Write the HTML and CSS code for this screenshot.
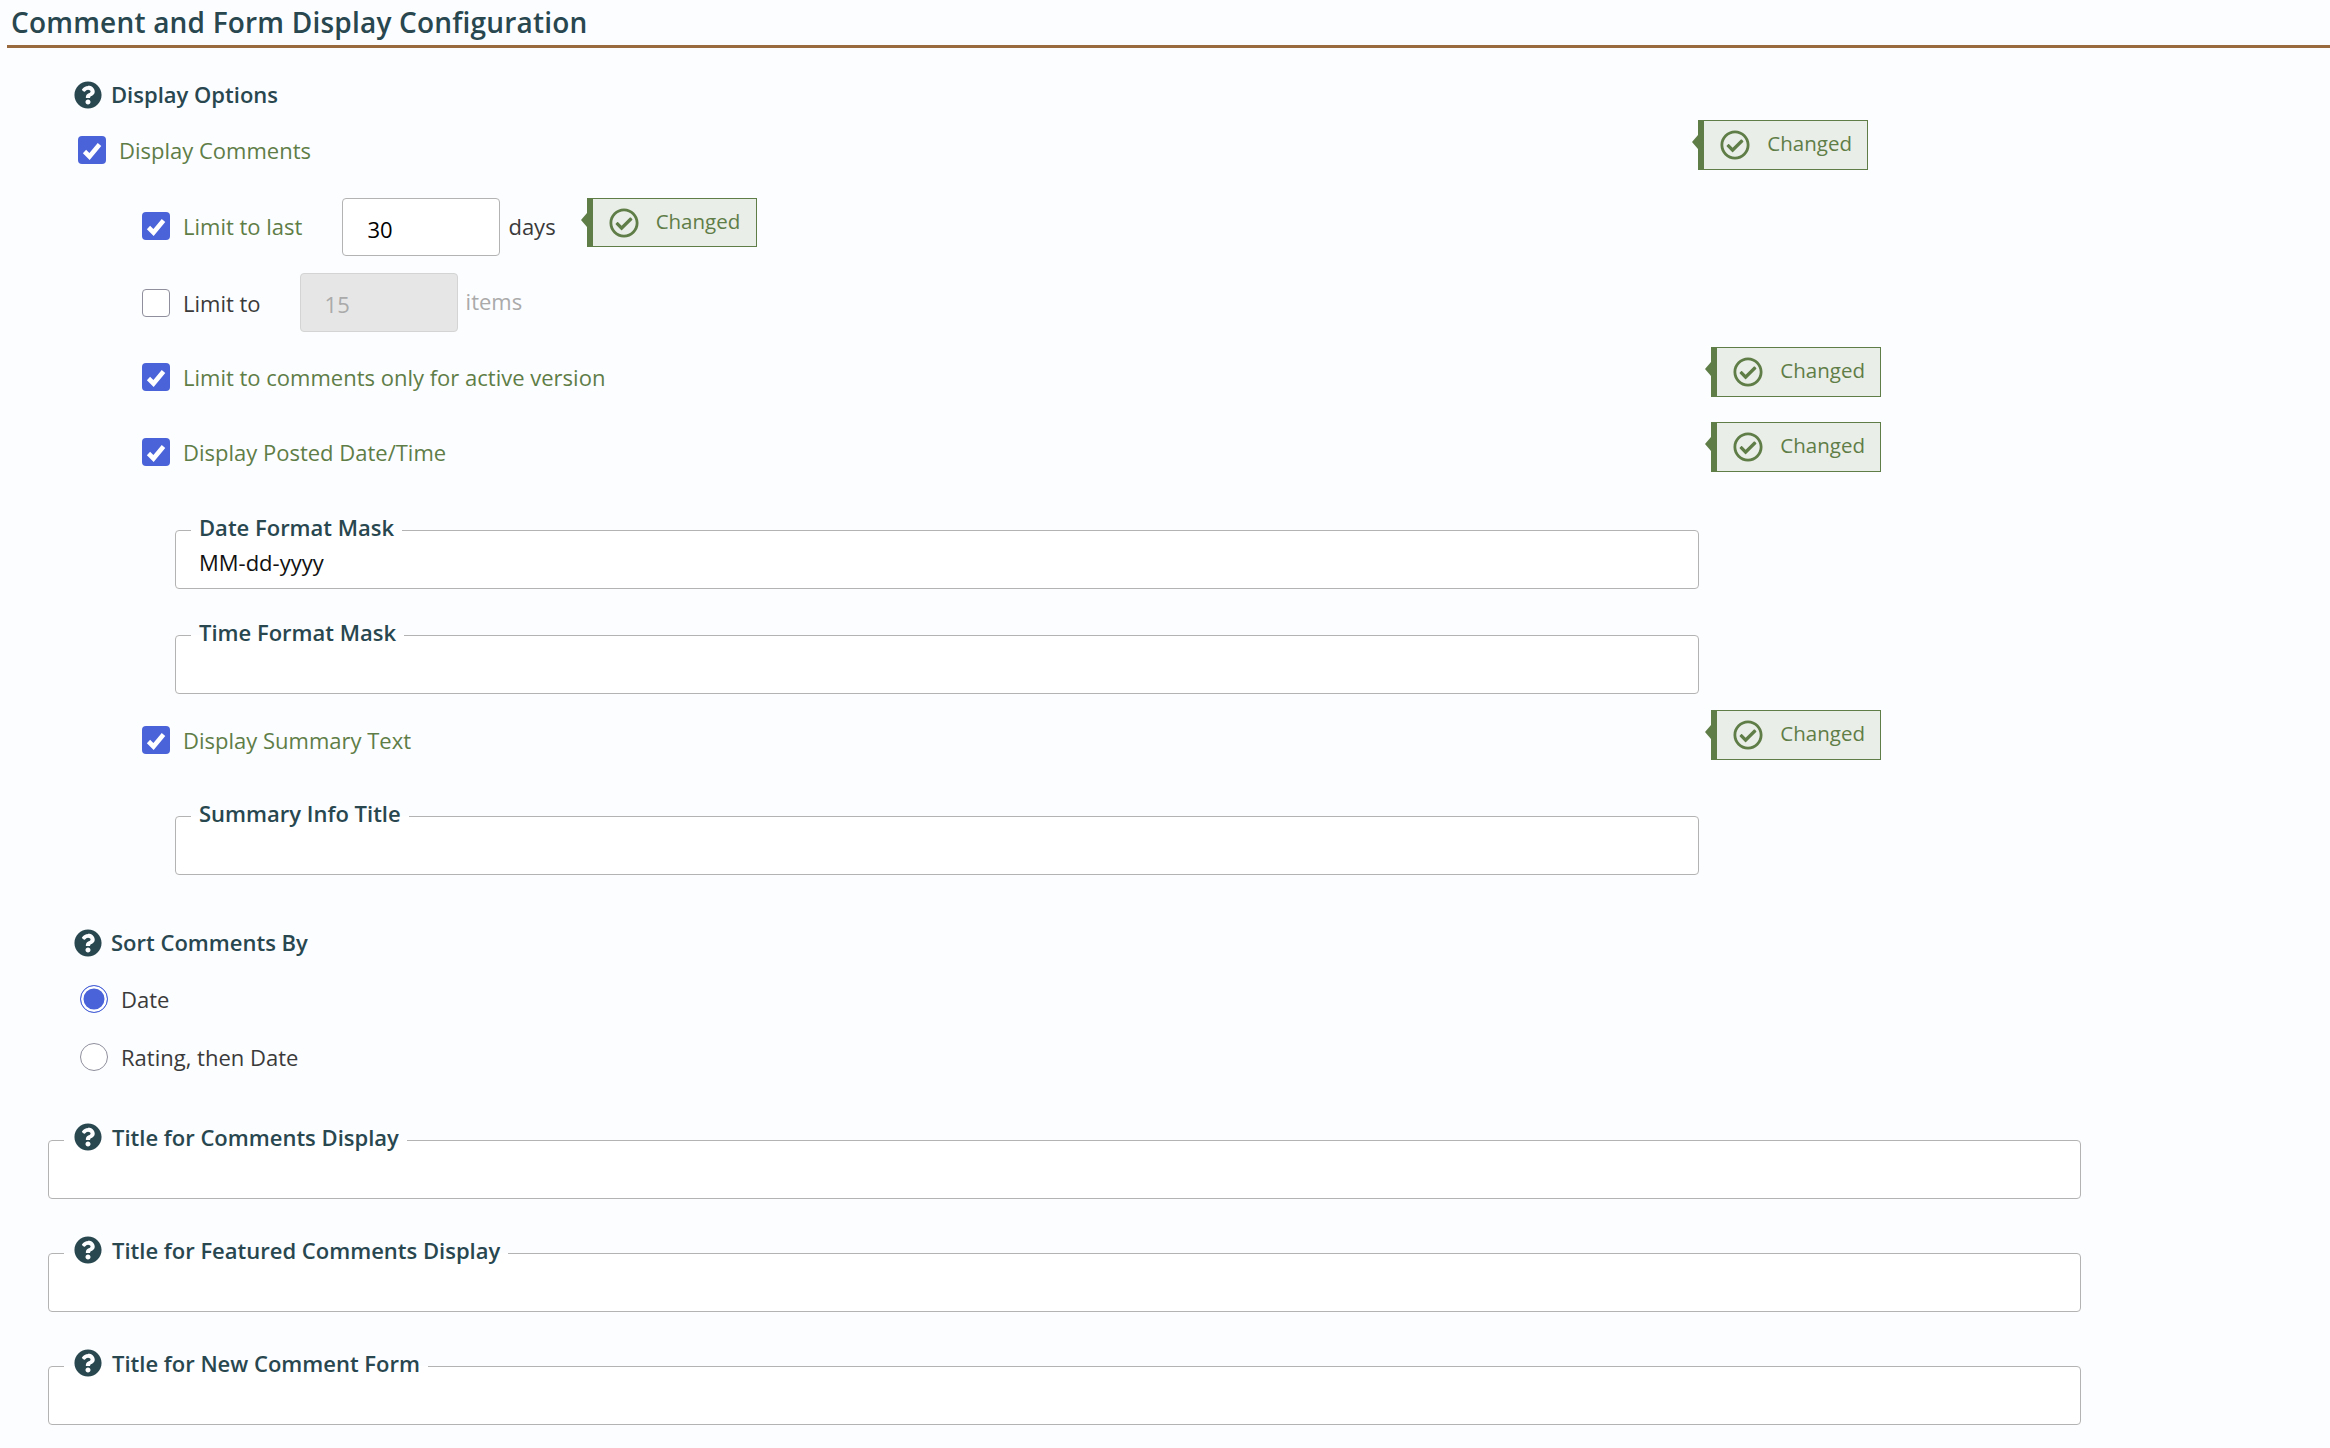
FILE: index.html
```html
<!DOCTYPE html>
<html lang="en">
<head>
<meta charset="utf-8">
<title>Comment and Form Display Configuration</title>
<link rel="stylesheet" href="styles.css">
</head>
<body>
<svg class="defs" width="0" height="0" aria-hidden="true">
  <symbol id="help" viewBox="0 0 512 512"><path d="M504 256c0 136.997-111.043 248-248 248S8 392.997 8 256C8 119.083 119.043 8 256 8s248 111.083 248 248zM262.655 90c-54.497 0-89.255 22.957-116.549 63.758-3.536 5.286-2.353 12.415 2.715 16.258l34.699 26.31c5.205 3.947 12.621 3.008 16.665-2.122 17.864-22.658 30.113-35.797 57.303-35.797 20.429 0 45.698 13.148 45.698 32.958 0 14.976-12.363 22.667-32.534 33.976C247.128 238.528 216 254.941 216 296v4c0 6.627 5.373 12 12 12h56c6.627 0 12-5.373 12-12v-1.333c0-28.462 83.186-29.647 83.186-106.667 0-58.002-60.165-111-116.531-111zM256 338c-25.365 0-46 20.635-46 46 0 25.364 20.635 46 46 46s46-20.636 46-46c0-25.365-20.635-46-46-46z"/></symbol>
  <symbol id="ok" viewBox="0 0 512 512"><path d="M256 8C119.033 8 8 119.033 8 256s111.033 248 248 248 248-111.033 248-248S392.967 8 256 8zm0 48c110.532 0 200 89.451 200 200 0 110.532-89.451 200-200 200-110.532 0-200-89.451-200-200 0-110.532 89.451-200 200-200m140.204 130.267l-22.536-22.718c-4.667-4.705-12.265-4.736-16.97-.068L215.346 303.697l-59.792-60.277c-4.667-4.705-12.265-4.736-16.97-.069l-22.719 22.536c-4.705 4.667-4.736 12.265-.068 16.971l90.781 91.516c4.667 4.705 12.265 4.736 16.97.068l172.589-171.204c4.704-4.668 4.734-12.266.067-16.971z"/></symbol>
  <symbol id="tick" viewBox="0 0 28 28"><path d="M6.5 15.5l5 5L21.5 8.5" fill="none" stroke="#fff" stroke-width="4.6"/></symbol>
</svg>

<h2 class="page-title">Comment and Form Display Configuration</h2>

<form class="form">
  <div class="group-label"><svg class="help"><use href="#help"/></svg><span>Display Options</span></div>

  <div class="row row-top row-first">
    <label class="check changed-text"><span class="box on"><svg><use href="#tick"/></svg></span>Display Comments</label>
    <div class="badge"><svg class="ok"><use href="#ok"/></svg><span>Changed</span></div>
  </div>

  <div class="row-sub row-limit-last">
    <label class="check changed-text"><span class="box on"><svg><use href="#tick"/></svg></span>Limit to last</label>
    <input class="num" type="text" value="30">
    <span class="unit">days</span>
    <div class="badge badge-inline"><svg class="ok"><use href="#ok"/></svg><span>Changed</span></div>
  </div>

  <div class="row-sub row-limit-to">
    <label class="check plain"><span class="box"></span>Limit to</label>
    <input class="num" type="text" value="15" disabled>
    <span class="unit off">items</span>
  </div>

  <div class="row row-top row-nested row-active">
    <label class="check changed-text"><span class="box on"><svg><use href="#tick"/></svg></span>Limit to comments only for active version</label>
    <div class="badge"><svg class="ok"><use href="#ok"/></svg><span>Changed</span></div>
  </div>

  <div class="row row-top row-nested row-posted">
    <label class="check changed-text"><span class="box on"><svg><use href="#tick"/></svg></span>Display Posted Date/Time</label>
    <div class="badge"><svg class="ok"><use href="#ok"/></svg><span>Changed</span></div>
  </div>

  <fieldset class="field field-nested field-date">
    <legend>Date Format Mask</legend>
    <input type="text" value="MM-dd-yyyy">
  </fieldset>

  <fieldset class="field field-nested field-time">
    <legend>Time Format Mask</legend>
    <input type="text">
  </fieldset>

  <div class="row row-top row-nested row-summary">
    <label class="check changed-text"><span class="box on"><svg><use href="#tick"/></svg></span>Display Summary Text</label>
    <div class="badge"><svg class="ok"><use href="#ok"/></svg><span>Changed</span></div>
  </div>

  <fieldset class="field field-nested field-info">
    <legend>Summary Info Title</legend>
    <input type="text">
  </fieldset>

  <div class="group-label group-sort"><svg class="help"><use href="#help"/></svg><span>Sort Comments By</span></div>

  <label class="radio radio-date"><span class="dot on"></span>Date</label>
  <label class="radio radio-rating"><span class="dot"></span>Rating, then Date</label>

  <fieldset class="field field-wide field-title-1">
    <legend><svg class="help"><use href="#help"/></svg>Title for Comments Display</legend>
    <input type="text">
  </fieldset>

  <fieldset class="field field-wide field-title-2">
    <legend><svg class="help"><use href="#help"/></svg>Title for Featured Comments Display</legend>
    <input type="text">
  </fieldset>

  <fieldset class="field field-wide field-title-3">
    <legend><svg class="help"><use href="#help"/></svg>Title for New Comment Form</legend>
    <input type="text">
  </fieldset>
</form>
</body>
</html>
```

FILE: styles.css
```css
* { box-sizing: border-box; }
html, body { margin: 0; padding: 0; }
body {
  background: #fcfdff;
  font-family: "Open Sans", "Liberation Sans", sans-serif;
  font-size: 22px;
  line-height: 30px;
  color: #3a3a3a;
  min-height: 1448px;
  overflow: hidden;
}
.defs { position: absolute; }

.page-title {
  margin: 0 0 0 7px;
  height: 48px;
  padding: 3px 0 0 4px;
  font-size: 28px;
  line-height: 38px;
  font-weight: 600;
  color: #28474f;
  letter-spacing: .2px;
  border-bottom: 3px solid #9a6a3f;
}

.form { display: flow-root; }

.help { width: 28px; height: 28px; fill: #28474f; flex: none; }

.group-label {
  display: flex;
  align-items: center;
  gap: 9px;
  height: 30px;
  margin: 32px 0 0 74px;
  font-weight: 600;
  color: #28474f;
}
.group-label span { margin-bottom: 2px; }
.group-sort { margin-top: 53px; }

.row { display: flex; justify-content: space-between; align-items: flex-start; height: 50px; }
.row-first { margin: 10px 0 0 78px; width: 1790px; }
.row-nested { margin-left: 142px; width: 1739px; height: 50px; }
.row-nested .badge { height: 50px; }
.row-active { margin-top: 15px; }
.row-posted { margin-top: 25px; }
.row-summary { margin-top: 16px; }
.row-top .check { margin-top: 16px; }

.row-sub { display: flex; align-items: center; margin-left: 142px; height: 58px; }
.row-limit-last { margin-top: 28px; }
.row-limit-last .check { margin-bottom: 2px; }
.row-limit-to { margin-top: 17px; height: 59px; }
.row-limit-to .num { height: 59px; margin-left: 39px; }

.check { display: flex; align-items: center; gap: 13px; height: 28px; }
.changed-text { color: #5f7d47; }
.plain { color: #3a3a3a; }

.box {
  flex: none;
  width: 28px;
  height: 28px;
  border: 1.5px solid #8f8f9d;
  border-radius: 4px;
  background: #fff;
}
.box.on { border: 0; background: #4a63d8; }
.box svg { display: block; width: 28px; height: 28px; }

.num {
  width: 158px;
  height: 58px;
  margin-left: 40px;
  padding: 3px 0 0 24px;
  border: 1.5px solid #b3b3b3;
  border-radius: 4px;
  background: #fff;
  font: inherit;
  color: #000;
  outline: 0;
}
.num:disabled { background: #e6e6e6; border-color: #d4d4d4; color: #aaa; }

.unit { margin: 0 0 2px 8px; color: #3a3a3a; }
.unit.off { color: #aaa; margin-bottom: 3px; }

.badge {
  position: relative;
  display: flex;
  align-items: center;
  gap: 17px;
  height: 50px;
  padding: 0 15px 0 16px;
  background: #eaeee8;
  border: 1.5px solid #5f7d47;
  border-left-width: 6px;
  color: #5f7d47;
  font-size: 20.5px;
  flex: none;
}
.badge span { margin-bottom: 4px; }
.badge::before {
  content: "";
  position: absolute;
  left: -12px;
  top: 14px;
  border: 7px solid transparent;
  border-left-width: 0;
  border-right: 6px solid #5f7d47;
}
.badge-inline { margin-left: 31px; align-self: flex-start; height: 49px; width: 170px; }
.ok { width: 30px; height: 30px; fill: #5f7d47; flex: none; }

.field {
  display: block;
  padding: 0 16px 0 15px;
  border: 1.5px solid #b3b3b3;
  border-radius: 4px;
  background: #fff;
  min-width: 0;
  margin-right: 0;
}
.field legend {
  display: flex;
  align-items: center;
  gap: 9px;
  padding: 0 8px 6px;
  height: 30px;
  font-weight: 600;
  color: #28474f;
}
.field input {
  display: block;
  width: 100%;
  height: 43px;
  padding: 0 0 10px 8px;
  border: 0;
  background: transparent;
  font: inherit;
  color: #111;
  outline: 0;
}
.field-nested { margin-left: 175px; width: 1524px; }
.field-wide { margin-left: 48px; width: 2033px; }
.field-wide legend { padding: 0 8px 6px 10px; gap: 10px; }
.field-date { margin-top: 43px; }
.field-time { margin-top: 31px; }
.field-info { margin-top: 41px; }
.field-title-1 { margin-top: 54px; }
.field-title-2, .field-title-3 { margin-top: 39px; }

.radio { display: flex; align-items: center; gap: 13px; height: 28px; color: #3a3a3a; margin-left: 80px; }
.radio-date { margin-top: 27px; }
.radio-rating { margin-top: 30px; }
.dot {
  flex: none;
  width: 28px;
  height: 28px;
  border: 1.5px solid #8f8f9d;
  border-radius: 50%;
  background: #fff;
}
.dot.on { border-color: #4a63d8; background: #4a63d8; box-shadow: inset 0 0 0 2.5px #fff; }
```
